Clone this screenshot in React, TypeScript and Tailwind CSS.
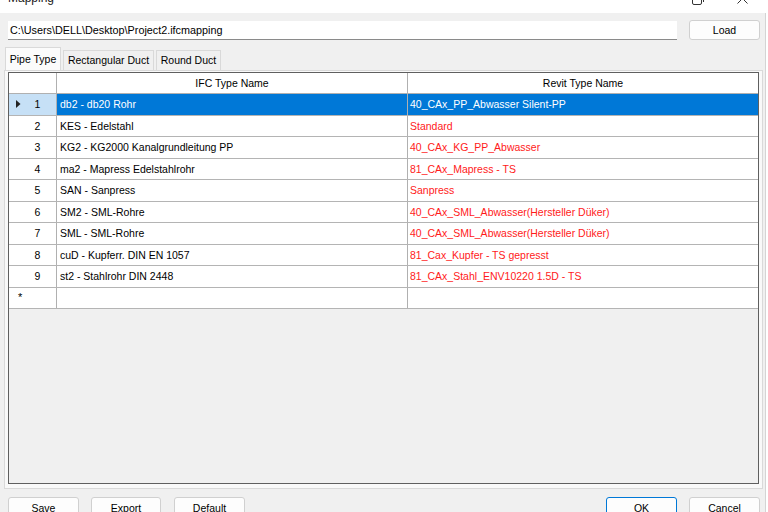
import React from 'react'

const rows = [
  { ifc: 'db2 - db20 Rohr', revit: '40_CAx_PP_Abwasser Silent-PP' },
  { ifc: 'KES - Edelstahl', revit: 'Standard' },
  { ifc: 'KG2 - KG2000 Kanalgrundleitung PP', revit: '40_CAx_KG_PP_Abwasser' },
  { ifc: 'ma2 - Mapress Edelstahlrohr', revit: '81_CAx_Mapress - TS' },
  { ifc: 'SAN - Sanpress', revit: 'Sanpress' },
  { ifc: 'SM2 - SML-Rohre', revit: '40_CAx_SML_Abwasser(Hersteller Düker)' },
  { ifc: 'SML - SML-Rohre', revit: '40_CAx_SML_Abwasser(Hersteller Düker)' },
  { ifc: 'cuD - Kupferr. DIN EN 1057', revit: '81_Cax_Kupfer - TS gepresst' },
  { ifc: 'st2 - Stahlrohr DIN 2448', revit: '81_CAx_Stahl_ENV10220 1.5D - TS' },
]

function Btn({ label, w, h = 'h-[23px]', primary }: { label: string; w: string; h?: string; primary?: boolean }) {
  return (
    <div
      className={`${w} ${h} flex items-center justify-center rounded-[3px] bg-[#fdfdfd] border ${
        primary ? 'border-[#0078d7]' : 'border-[#d0d0d0]'
      }`}
    >
      {label}
    </div>
  )
}

export default function App() {
  return (
    <div className="w-[768px] h-[512px] overflow-hidden bg-white text-[10.5px] text-black font-['Liberation_Sans',Arial,sans-serif] leading-none">
      {/* title bar */}
      <div className="relative h-[13px] w-[766px] overflow-hidden bg-white">
        <span className="absolute left-[8px] top-[-8px] text-[12px] text-[#1a1a1a]">Mapping</span>
        <svg className="absolute left-[691px] top-[-7px]" width="13" height="12" viewBox="0 0 13 12">
          <rect x="1.5" y="2.5" width="9" height="9" rx="1.5" fill="none" stroke="#333" strokeWidth="1" />
          <path d="M4 0.5h6.5a2 2 0 0 1 2 2V9" fill="none" stroke="#333" strokeWidth="1" />
        </svg>
        <svg className="absolute left-[737px] top-[-7px]" width="11" height="11" viewBox="0 0 11 11">
          <path d="M0.5 0.5L10.5 10.5M10.5 0.5L0.5 10.5" stroke="#333" strokeWidth="1" />
        </svg>
      </div>

      <div className="w-[766px] h-[499px] bg-[#f0f0f0] border-r border-[#d4d4d4] flex flex-col">
        {/* path row */}
        <div className="flex items-start pl-[8px] pt-[7px]">
          <div className="mt-[1px] w-[669px] h-[19px] bg-white border-b border-[#8a8a8a] flex items-center pl-[2px] text-[10.8px]">
            C:\Users\DELL\Desktop\Project2.ifcmapping
          </div>
          <div className="ml-[12px]">
            <Btn label="Load" w="w-[71px]" h="h-[20px]" />
          </div>
        </div>

        {/* tabs */}
        <div className="mt-[7px] pl-[5px] flex items-end h-[23px]">
          <div className="w-[56px] h-[23px] bg-[#fbfbfb] border border-b-0 border-[#d9d9d9] flex items-center justify-center relative z-10">
            Pipe Type
          </div>
          <div className="ml-[2px] w-[91px] h-[20px] bg-[#f0f0f0] border border-b-0 border-[#d9d9d9] flex items-center justify-center">
            Rectangular Duct
          </div>
          <div className="ml-[2px] w-[65px] h-[20px] bg-[#f0f0f0] border border-b-0 border-[#d9d9d9] flex items-center justify-center">
            Round Duct
          </div>
        </div>

        {/* tab page */}
        <div className="ml-[4px] w-[759px] h-[419px] border border-[#d9d9d9] bg-[#f9f9f9] pt-[1px] px-[3px] pb-[4px]">
          <div className="w-[751px] h-[412px] border border-[#5f5f5f] bg-[#f0f0f0] flex flex-col">
            {/* header */}
            <div className="flex h-[21px] bg-white border-b border-[#b0b0b0] shrink-0">
              <div className="w-[48px] border-r border-[#b0b0b0]" />
              <div className="w-[351px] border-r border-[#b0b0b0] flex items-center justify-center">
                IFC Type Name
              </div>
              <div className="flex-1 flex items-center justify-center">Revit Type Name</div>
            </div>

            {rows.map((r, i) => {
              const sel = i === 0
              return (
                <div key={i} className="flex h-[21.5px] bg-white border-b border-[#b4b4b4] shrink-0">
                  <div
                    className={`relative w-[48px] border-r border-[#b0b0b0] flex items-center justify-center pl-[10px] ${
                      sel ? 'bg-[#c6e0f6]' : 'bg-white'
                    }`}
                  >
                    {sel && (
                      <svg className="absolute left-[7px] top-[6px]" width="5" height="8" viewBox="0 0 5 8">
                        <path d="M0 0L4.5 4L0 8Z" fill="#222" />
                      </svg>
                    )}
                    {i + 1}
                  </div>
                  <div
                    className={`w-[351px] border-r border-[#b0b0b0] flex items-center pl-[3px] ${
                      sel ? 'bg-[#0078d7] text-white' : ''
                    }`}
                  >
                    {r.ifc}
                  </div>
                  <div
                    className={`flex-1 flex items-center pl-[2px] ${
                      sel ? 'bg-[#0078d7] text-white' : 'text-[#ff1a1a]'
                    }`}
                  >
                    {r.revit}
                  </div>
                </div>
              )
            })}

            {/* new row */}
            <div className="flex h-[21.5px] bg-white border-b border-[#b4b4b4] shrink-0">
              <div className="relative w-[48px] border-r border-[#b0b0b0] flex items-center pl-[9px] text-[11px]">
                *
              </div>
              <div className="w-[351px] border-r border-[#b0b0b0]" />
              <div className="flex-1" />
            </div>
          </div>
        </div>

        {/* bottom buttons */}
        <div className="mt-[8px] pl-[8px] flex">
          <Btn label="Save" w="w-[71px]" />
          <div className="ml-[12px]">
            <Btn label="Export" w="w-[70px]" />
          </div>
          <div className="ml-[13px]">
            <Btn label="Default" w="w-[71px]" />
          </div>
          <div className="ml-auto mr-[5px] flex gap-[12px]">
            <Btn label="OK" w="w-[71px]" primary />
            <Btn label="Cancel" w="w-[71px]" />
          </div>
        </div>
      </div>
    </div>
  )
}
